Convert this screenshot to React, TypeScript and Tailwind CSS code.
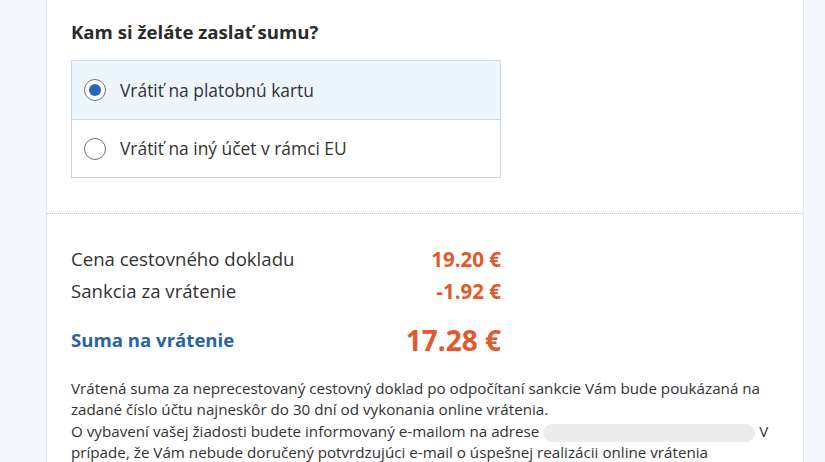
import React from "react";

export default function App() {
  const font = { fontFamily: '"Open Sans", "Noto Sans", sans-serif' };
  return (
    <div className="w-[825px] h-[462px] overflow-hidden bg-[#f4f8fc] flex" style={font}>
      <div className="w-[46px] shrink-0" />
      <div className="w-[758px] shrink-0 bg-white border-x border-[#e3e9f0] flex flex-col">
        <div className="pl-[24px] pt-[19px]">
          <h2 className="text-[18.6px] leading-[26px] font-bold text-[#2b2b2b]">Kam si želáte zaslať sumu?</h2>
          <div className="mt-[15px] w-[430px] border border-[#cfd9e2] flex flex-col">
            <div className="h-[59px] bg-[#edf5fd] border-b border-[#cfd9e2] flex items-center pl-[12px]">
              <span className="w-[22px] h-[22px] rounded-full border-[1.5px] border-[#6b7480] bg-white flex items-center justify-center">
                <span className="w-[12px] h-[12px] rounded-full bg-[#2a66b8]" />
              </span>
              <span className="ml-[14px] text-[17.4px] text-[#333]">Vrátiť na platobnú kartu</span>
            </div>
            <div className="h-[57px] bg-white flex items-center pl-[12px]">
              <span className="w-[22px] h-[22px] rounded-full border-[1.5px] border-[#6b7480] bg-white" />
              <span className="ml-[14px] text-[17.4px] text-[#333]">Vrátiť na iný účet v rámci EU</span>
            </div>
          </div>
        </div>
        <div className="mt-[35px] border-t border-dotted border-[#c4c9cf]" />
        <div className="pl-[24px] pt-[29px]">
          <div className="w-[430px]">
            <div className="flex items-center justify-between h-[32px]">
              <span className="text-[18.6px] text-[#333]">Cena cestovného dokladu</span>
              <span className="text-[20.5px] font-bold text-[#e2592c]">19.20 €</span>
            </div>
            <div className="flex items-center justify-between h-[32px]">
              <span className="text-[18.6px] text-[#333]">Sankcia za vrátenie</span>
              <span className="text-[20.5px] font-bold text-[#e2592c]">-1.92 €</span>
            </div>
            <div className="flex items-center justify-between h-[48px] mt-[9px]">
              <span className="text-[18.6px] font-bold text-[#2a62a8]">Suma na vrátenie</span>
              <span className="text-[28px] font-bold text-[#e2592c]">17.28 €</span>
            </div>
          </div>
          <div className="mt-[14px] w-[700px] text-[15.2px] leading-[21.4px] text-[#333]">
            <p>Vrátená suma za neprecestovaný cestovný doklad po odpočítaní sankcie Vám bude poukázaná na zadané číslo účtu najneskôr do 30 dní od vykonania online vrátenia.</p>
            <p>
              O vybavení vašej žiadosti budete informovaný e-mailom na adrese{" "}
              <span className="inline-block align-middle w-[212px] h-[18px] rounded-full bg-[#ececec]" /> V prípade, že Vám nebude doručený potvrdzujúci e-mail o úspešnej realizácii online vrátenia
            </p>
          </div>
        </div>
      </div>
      <div className="flex-1" />
    </div>
  );
}
